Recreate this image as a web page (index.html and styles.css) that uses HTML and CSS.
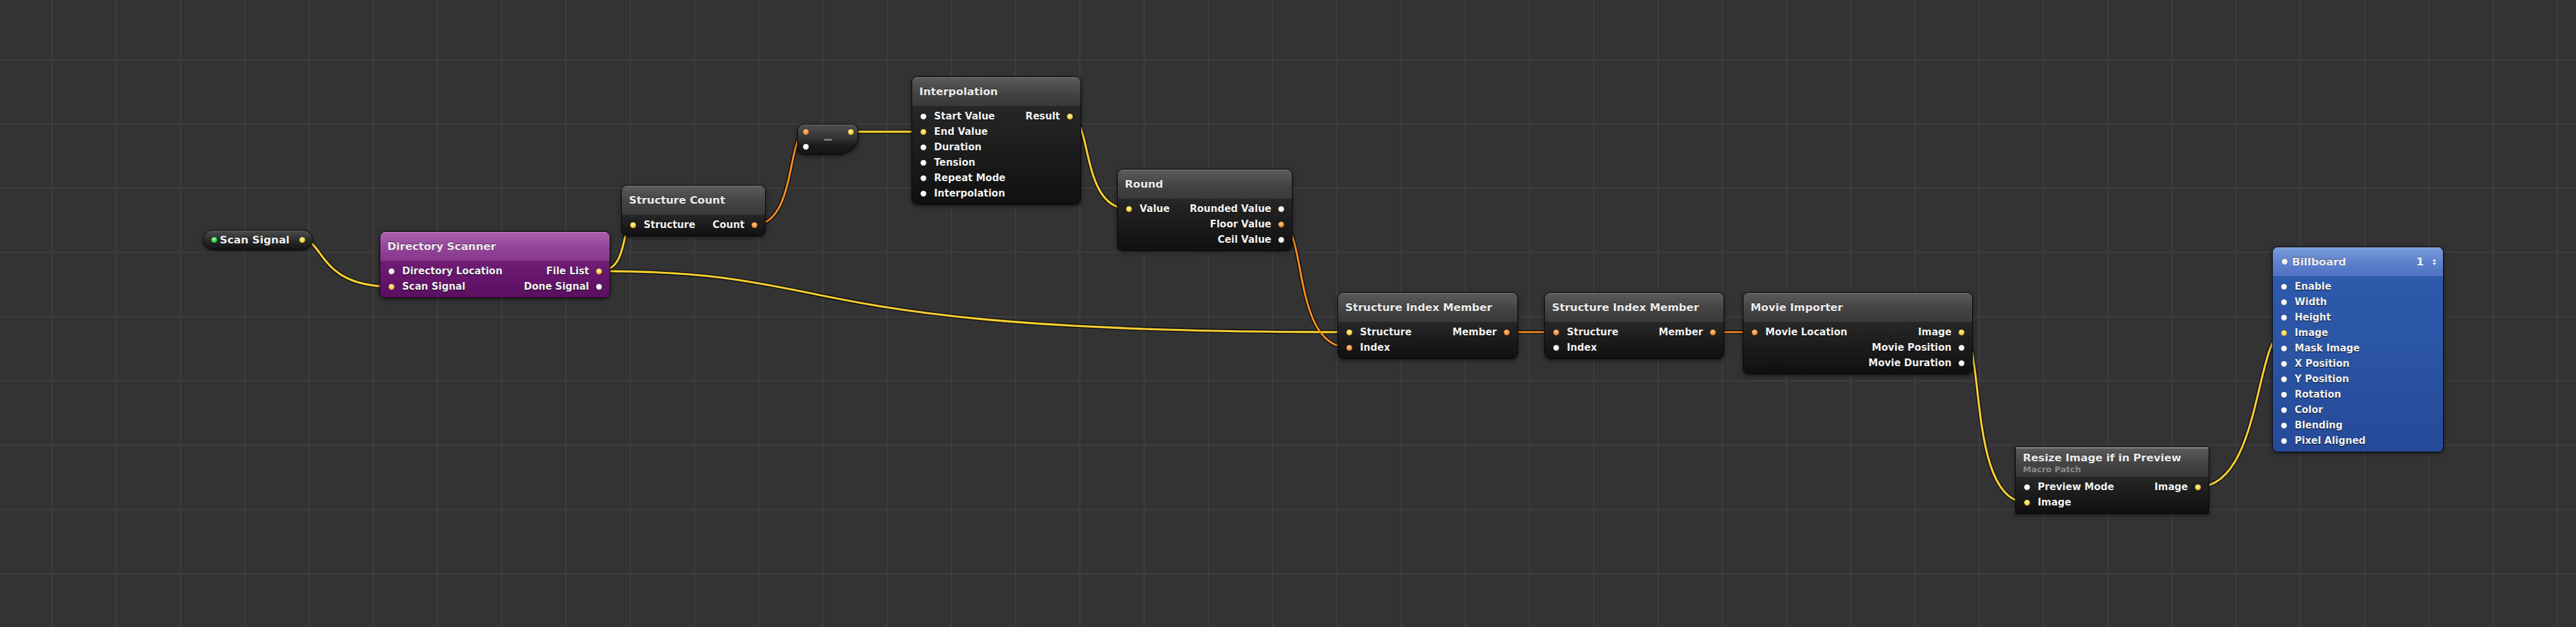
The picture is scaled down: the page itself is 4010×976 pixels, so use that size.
FILE: index.html
```html
<!DOCTYPE html>
<html lang="en">
<head>
<meta charset="utf-8">
<title>Composition</title>
<link rel="stylesheet" href="styles.css">
</head>
<body>
<div class="canvas">
  <svg class="cables" width="4010" height="976" viewBox="0 0 4010 976">
    <g class="under">
      <path d="M470 373 C505 373 495 446 609 446"/>
      <path d="M932 422 C980 422 965 350 985 350"/>
      <path d="M932 422 C1332 422 1200 517 2100 517"/>
      <path d="M1174 350 C1240 350 1225 205 1255 205"/>
      <path d="M1324 205 L1437 205"/>
      <path d="M1665 181 C1701 181 1681 325 1757 325"/>
      <path d="M1994 349 C2035 349 2010 541 2100 541"/>
      <path d="M2345 517 L2422 517"/>
      <path d="M2666 517 L2731 517"/>
      <path d="M3053 517 C3091 517 3061 782 3155 782"/>
      <path d="M3421 758 C3521 758 3511 518 3555 518"/>
    </g>
    <g class="yellow">
      <path d="M470 373 C505 373 495 446 609 446"/>
      <path d="M932 422 C980 422 965 350 985 350"/>
      <path d="M932 422 C1332 422 1200 517 2100 517"/>
      <path d="M1324 205 L1437 205"/>
      <path d="M1665 181 C1701 181 1681 325 1757 325"/>
      <path d="M3053 517 C3091 517 3061 782 3155 782"/>
      <path d="M3421 758 C3521 758 3511 518 3555 518"/>
    </g>
    <g class="orange">
      <path d="M1174 350 C1240 350 1225 205 1255 205"/>
      <path d="M1994 349 C2035 349 2010 541 2100 541"/>
      <path d="M2345 517 L2422 517"/>
      <path d="M2666 517 L2731 517"/>
    </g>
  </svg>

  <div class="pill n-scan">
    <i class="dot g"></i><span class="pill-label">Scan Signal</span><i class="dot y push"></i>
  </div>

  <div class="node purple n-dirscan">
    <div class="hdr"><span class="title">Directory Scanner</span></div>
    <div class="body">
      <div class="col in">
        <div class="port"><i class="dot w"></i>Directory Location</div>
        <div class="port"><i class="dot y"></i>Scan Signal</div>
      </div>
      <div class="col out">
        <div class="port">File List<i class="dot y"></i></div>
        <div class="port">Done Signal<i class="dot w"></i></div>
      </div>
    </div>
  </div>

  <div class="node n-scount">
    <div class="hdr"><span class="title">Structure Count</span></div>
    <div class="body">
      <div class="col in">
        <div class="port"><i class="dot y"></i>Structure</div>
      </div>
      <div class="col out">
        <div class="port">Count<i class="dot o"></i></div>
      </div>
    </div>
  </div>

  <div class="minus n-minus">
    <i class="dot o m-in1"></i>
    <span class="minus-sign"></span>
    <i class="dot y m-out"></i>
    <i class="dot w m-in2"></i>
  </div>

  <div class="node n-interp">
    <div class="hdr"><span class="title">Interpolation</span></div>
    <div class="body">
      <div class="col in">
        <div class="port"><i class="dot w"></i>Start Value</div>
        <div class="port"><i class="dot y"></i>End Value</div>
        <div class="port"><i class="dot w"></i>Duration</div>
        <div class="port"><i class="dot w"></i>Tension</div>
        <div class="port"><i class="dot w"></i>Repeat Mode</div>
        <div class="port"><i class="dot w"></i>Interpolation</div>
      </div>
      <div class="col out">
        <div class="port">Result<i class="dot y"></i></div>
      </div>
    </div>
  </div>

  <div class="node n-round">
    <div class="hdr"><span class="title">Round</span></div>
    <div class="body">
      <div class="col in">
        <div class="port"><i class="dot y"></i>Value</div>
      </div>
      <div class="col out">
        <div class="port">Rounded Value<i class="dot w"></i></div>
        <div class="port">Floor Value<i class="dot o"></i></div>
        <div class="port">Ceil Value<i class="dot w"></i></div>
      </div>
    </div>
  </div>

  <div class="node n-sim1">
    <div class="hdr"><span class="title">Structure Index Member</span></div>
    <div class="body">
      <div class="col in">
        <div class="port"><i class="dot y"></i>Structure</div>
        <div class="port"><i class="dot o"></i>Index</div>
      </div>
      <div class="col out">
        <div class="port">Member<i class="dot o"></i></div>
      </div>
    </div>
  </div>

  <div class="node n-sim2">
    <div class="hdr"><span class="title">Structure Index Member</span></div>
    <div class="body">
      <div class="col in">
        <div class="port"><i class="dot o"></i>Structure</div>
        <div class="port"><i class="dot w"></i>Index</div>
      </div>
      <div class="col out">
        <div class="port">Member<i class="dot o"></i></div>
      </div>
    </div>
  </div>

  <div class="node n-movie">
    <div class="hdr"><span class="title">Movie Importer</span></div>
    <div class="body">
      <div class="col in">
        <div class="port"><i class="dot o"></i>Movie Location</div>
      </div>
      <div class="col out">
        <div class="port">Image<i class="dot y"></i></div>
        <div class="port">Movie Position<i class="dot w"></i></div>
        <div class="port">Movie Duration<i class="dot w"></i></div>
      </div>
    </div>
  </div>

  <div class="node macro n-resize">
    <div class="hdr">
      <span class="title">Resize Image if in Preview</span>
      <span class="sub">Macro Patch</span>
    </div>
    <div class="body">
      <div class="col in">
        <div class="port"><i class="dot w"></i>Preview Mode</div>
        <div class="port"><i class="dot y"></i>Image</div>
      </div>
      <div class="col out">
        <div class="port">Image<i class="dot y"></i></div>
      </div>
    </div>
  </div>

  <div class="node blue n-billboard">
    <div class="hdr">
      <i class="dot w"></i><span class="title">Billboard</span>
      <span class="layer">1</span>
      <svg class="stepper" width="7" height="12" viewBox="0 0 7 12"><polygon points="0.5,5 3.5,1 6.5,5"/><polygon points="0.5,7 3.5,11 6.5,7"/></svg>
    </div>
    <div class="body">
      <div class="col in">
        <div class="port"><i class="dot w"></i>Enable</div>
        <div class="port"><i class="dot w"></i>Width</div>
        <div class="port"><i class="dot w"></i>Height</div>
        <div class="port"><i class="dot y"></i>Image</div>
        <div class="port"><i class="dot w"></i>Mask Image</div>
        <div class="port"><i class="dot w"></i>X Position</div>
        <div class="port"><i class="dot w"></i>Y Position</div>
        <div class="port"><i class="dot w"></i>Rotation</div>
        <div class="port"><i class="dot w"></i>Color</div>
        <div class="port"><i class="dot w"></i>Blending</div>
        <div class="port"><i class="dot w"></i>Pixel Aligned</div>
      </div>
    </div>
  </div>
</div>
</body>
</html>
```

FILE: styles.css
```css
html, body {
  margin: 0;
  padding: 0;
  background: #333333;
}

.canvas {
  position: relative;
  width: 4010px;
  height: 976px;
  overflow: hidden;
  background-color: #333333;
  background-image:
    linear-gradient(to right, #3e3e3e 2px, transparent 2px),
    linear-gradient(to bottom, #3e3e3e 2px, transparent 2px);
  background-size: 100px 100px;
  background-position: 80px 92px;
  font-family: "DejaVu Sans", "Liberation Sans", sans-serif;
  font-weight: bold;
  color: #f2f2f2;
}

/* cables */
.cables {
  position: absolute;
  left: 0;
  top: 0;
}
.cables path {
  fill: none;
  stroke-linecap: round;
}
.cables .under path {
  stroke: rgba(0, 0, 0, 0.85);
  stroke-width: 6;
}
.cables .yellow path {
  stroke: #f3cc34;
  stroke-width: 3.4;
}
.cables .orange path {
  stroke: #f18c22;
  stroke-width: 3.2;
}

/* port dots */
.dot {
  display: block;
  width: 9px;
  height: 9px;
  border-radius: 50%;
  flex: none;
  box-shadow: 0 0 1px rgba(0, 0, 0, 0.6);
}
.dot.w { background: radial-gradient(circle at 45% 35%, #ffffff 0, #f4f4f4 45%, #c4c4c4 100%); }
.dot.y { background: radial-gradient(circle at 45% 35%, #fff4b0 0, #f7d44c 45%, #cf9f1c 100%); }
.dot.o { background: radial-gradient(circle at 45% 35%, #ffcf98 0, #f5953c 45%, #c66212 100%); }
.dot.g { background: radial-gradient(circle at 45% 35%, #b8ffb8 0, #38e048 45%, #1c9a28 100%); }

/* generic node */
.node {
  position: absolute;
  box-sizing: border-box;
  border: 1px solid #080808;
  border-radius: 9px;
  overflow: hidden;
  box-shadow: 0 2px 6px rgba(0, 0, 0, 0.55);
}
.node .hdr {
  height: 45px;
  display: flex;
  align-items: center;
  padding: 0 11px;
  background: linear-gradient(#5b5b5b, #444444 55%, #393939);
  box-shadow: inset 0 1px 0 rgba(255, 255, 255, 0.22);
}
.title {
  font-size: 16.6px;
  color: #ececec;
  white-space: nowrap;
  text-shadow: 0 -1px 0 rgba(0, 0, 0, 0.55);
}
.node .body {
  display: flex;
  justify-content: space-between;
  padding: 4px 0 5px;
  background: linear-gradient(#272727, #1b1b1b 50%, #101010);
}
.col {
  display: flex;
  flex-direction: column;
}
.port {
  height: 24px;
  display: flex;
  align-items: center;
  font-size: 15px;
  white-space: nowrap;
  text-shadow: 0 1px 1px rgba(0, 0, 0, 0.9);
}
.col.in .port {
  padding-left: 13px;
  gap: 12px;
}
.col.out .port {
  padding-right: 12px;
  gap: 11px;
  justify-content: flex-end;
}

/* purple (provider) */
.node.purple .hdr {
  background: linear-gradient(#ab62b0, #934499 55%, #86388b);
}
.node.purple .body {
  background: linear-gradient(#701d75, #65156b 50%, #5a0f60);
}

/* blue (consumer) */
.node.blue .hdr {
  background: linear-gradient(#7b9bdc, #5c80cc 55%, #4f73c3);
  padding-left: 14px;
  padding-right: 10px;
  gap: 7px;
}
.node.blue .body {
  background: linear-gradient(#2e5aac, #2a53a3 50%, #254a99);
}
.layer {
  margin-left: auto;
  font-size: 16.6px;
  color: #f0f0f0;
  margin-right: 6px;
}
.stepper polygon {
  fill: #eeeeee;
}

/* macro patch */
.node.macro {
  border-radius: 2px;
}
.node.macro .hdr {
  height: 46px;
  box-sizing: border-box;
  flex-direction: column;
  align-items: flex-start;
  justify-content: flex-start;
  padding-top: 7px;
  box-shadow: inset 0 2px 0 rgba(255, 255, 255, 0.3);
}
.node.macro .title {
  line-height: 20px;
}
.sub {
  font-size: 13px;
  line-height: 16px;
  color: #8d8d8d;
}

/* splitter pill */
.pill {
  position: absolute;
  box-sizing: border-box;
  height: 31px;
  border: 1px solid #050505;
  border-radius: 16px;
  display: flex;
  align-items: center;
  padding: 0 11.5px 0 12px;
  gap: 4px;
  background: linear-gradient(#4d4d4d, #2c2c2c 50%, #141414);
  box-shadow: 0 2px 5px rgba(0, 0, 0, 0.55), inset 0 1px 0 rgba(255, 255, 255, 0.18);
}
.pill-label {
  font-size: 16.6px;
  color: #f0f0f0;
  text-shadow: 0 1px 1px rgba(0, 0, 0, 0.8);
}
.pill .push {
  margin-left: auto;
}

/* math patch */
.minus {
  position: absolute;
  box-sizing: border-box;
  border: 1px solid #060606;
  border-radius: 10px 10px 34px 10px / 10px 10px 26px 10px;
  display: grid;
  grid-template-columns: 9px 1fr 9px;
  grid-template-rows: 22px 24px;
  align-items: center;
  padding: 0 6.5px 0 8px;
  background: linear-gradient(#4f4f4f, #333333 45%, #1b1b1b 70%, #141414);
  box-shadow: 0 2px 6px rgba(0, 0, 0, 0.55), inset 0 1px 0 rgba(255, 255, 255, 0.2);
}
.m-in1 { grid-column: 1; grid-row: 1; }
.m-out { grid-column: 3; grid-row: 1; }
.m-in2 { grid-column: 1; grid-row: 2; }
.minus-sign {
  grid-column: 2;
  grid-row: 1 / span 2;
  justify-self: center;
  width: 12px;
  height: 3px;
  background: #7c7c7c;
}

/* placements on the canvas */
.n-scan { left: 316px; top: 358px; width: 171px; }
.n-dirscan { left: 591px; top: 360px; width: 359px; }
.n-scount { left: 967px; top: 288px; width: 225px; }
.n-minus { left: 1241px; top: 193px; width: 95px; height: 48px; }
.n-interp { left: 1419px; top: 119px; width: 264px; }
.n-round { left: 1739px; top: 263px; width: 273px; }
.n-sim1 { left: 2082px; top: 455px; width: 281px; }
.n-sim2 { left: 2404px; top: 455px; width: 280px; }
.n-movie { left: 2713px; top: 455px; width: 358px; }
.n-resize { left: 3137px; top: 695px; width: 302px; }
.n-billboard { left: 3537px; top: 384px; width: 267px; }
```
